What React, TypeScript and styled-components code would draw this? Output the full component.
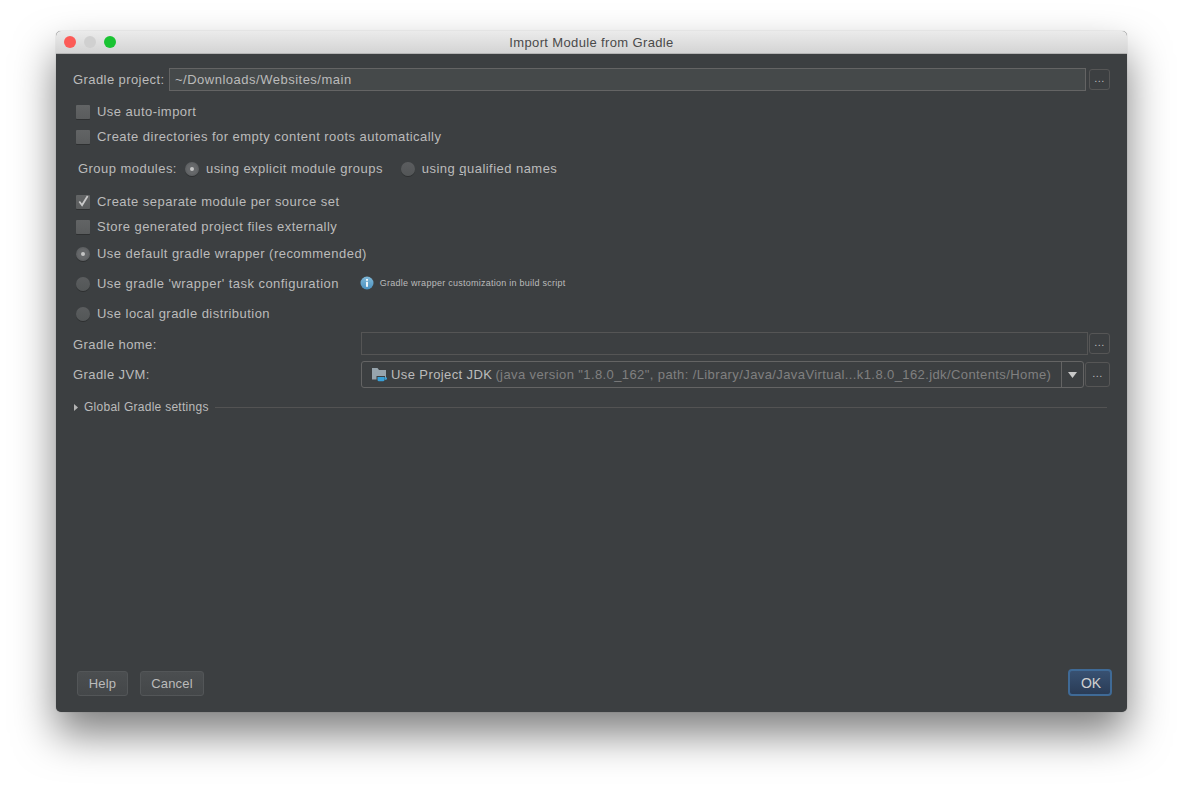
import React, { ReactElement } from 'react';
import styled, { createGlobalStyle } from 'styled-components';

const GlobalStyle = createGlobalStyle`
  html, body {
    margin: 0;
    height: 100%;
    background: #fff;
    overflow: hidden;
  }
  * {
    box-sizing: border-box;
  }
`;

function FolderCupIcon(): ReactElement {
  return (
    <svg width="16" height="16" viewBox="0 0 16 16">
      <path d="M0 1h5.5l1.5 2h7v9.5H0z" fill="#97a4ad" />
      <path d="M4.5 9h8.5v3.5a2 2 0 0 1-2 2H6.5a2 2 0 0 1-2-2z" fill="#3c3f41" />
      <path d="M5.5 10h7v2.8a1.5 1.5 0 0 1-1.5 1.5H7a1.5 1.5 0 0 1-1.5-1.5z" fill="#389fd6" />
      <path d="M12.5 10.5h2.5v2h-2.5z" fill="#389fd6" />
    </svg>
  );
}

function InfoIcon(): ReactElement {
  return (
    <svg width="14" height="14" viewBox="0 0 14 14">
      <defs>
        <linearGradient id="infoFill" x1="0" y1="0" x2="0" y2="1">
          <stop offset="0" stopColor="#7fb8d8" />
          <stop offset="1" stopColor="#4a90bf" />
        </linearGradient>
      </defs>
      <circle cx="7" cy="7" r="6.5" fill="url(#infoFill)" />
      <rect x="6" y="5.8" width="2" height="5" fill="#eef5fa" />
      <rect x="6" y="3" width="2" height="1.8" fill="#eef5fa" />
    </svg>
  );
}

function CheckboxRow({ label, checked }: { label: string; checked?: boolean }): ReactElement {
  return (
    <>
      <CheckBox>
        {checked && (
          <svg width="15" height="14" viewBox="0 0 15 14">
            <path d="M3.5 6.5l3 3.8L12.5 0.5" fill="none" stroke="#c8c8c8" strokeWidth="1.9" />
          </svg>
        )}
      </CheckBox>
      <OptionText>{label}</OptionText>
    </>
  );
}

function App(): ReactElement {
  return (
    <Page>
      <GlobalStyle />
      <Window>
        <TitleBar>
          <Lights>
            <Light $color="#fc5b57" />
            <Light $color="#d0d0d0" />
            <Light $color="#19c332" />
          </Lights>
          <Title>Import Module from Gradle</Title>
        </TitleBar>
        <Body>
          <Row $h={23} $indent={17}>
            <FieldLabel>Gradle project:</FieldLabel>
            <PathInput>~/Downloads/Websites/main</PathInput>
            <BrowseButton $width={21} $height={21}>...</BrowseButton>
          </Row>
          <Row $h={24} $top={8} $indent={20}>
            <CheckboxRow label="Use auto-import" />
          </Row>
          <Row $h={26} $indent={20}>
            <CheckboxRow label="Create directories for empty content roots automatically" />
          </Row>
          <Row $h={39} $indent={22}>
            <GroupLabel>Group modules:</GroupLabel>
            <Radio $checked />
            <GroupText>using explicit module groups</GroupText>
            <Radio />
            <OptionText>
              using <u>q</u>ualified names
            </OptionText>
          </Row>
          <Row $h={26} $indent={20}>
            <CheckboxRow label="Create separate module per source set" checked />
          </Row>
          <Row $h={24} $indent={20}>
            <CheckboxRow label="Store generated project files externally" />
          </Row>
          <Row $h={30} $indent={20}>
            <Radio $checked />
            <OptionText>Use default gradle wrapper (recommended)</OptionText>
          </Row>
          <Row $h={30} $indent={20}>
            <Radio />
            <OptionText>Use gradle 'wrapper' task configuration</OptionText>
            <Hint>
              <InfoIcon />
              <HintText>Gradle wrapper customization in build script</HintText>
            </Hint>
          </Row>
          <Row $h={30} $indent={20}>
            <Radio />
            <OptionText>Use local gradle distribution</OptionText>
          </Row>
          <Row $h={23} $top={4} $indent={17}>
            <HomeLabel>Gradle home:</HomeLabel>
            <HomeInput />
            <BrowseButton $width={21} $height={21}>...</BrowseButton>
          </Row>
          <Row $h={27} $top={6} $indent={17}>
            <WideLabel>Gradle JVM:</WideLabel>
            <Combo>
              <ComboValue>
                <FolderCupIcon />
                <JdkName>Use Project JDK</JdkName>
                <JdkPath>
                  (java version "1.8.0_162", path: /Library/Java/JavaVirtual...k1.8.0_162.jdk/Contents/Home)
                </JdkPath>
              </ComboValue>
              <ComboArrow>
                <svg width="9" height="6" viewBox="0 0 9 6">
                  <path d="M0 0h9L4.5 6z" fill="#c8c8c8" />
                </svg>
              </ComboArrow>
            </Combo>
            <BrowseButton $width={25} $height={25}>...</BrowseButton>
          </Row>
          <Row $h={38} $indent={18}>
            <svg width="4" height="7" viewBox="0 0 4 7">
              <path d="M0 0l4 3.5-4 3.5z" fill="#b4b4b4" />
            </svg>
            <SectionText>Global Gradle settings</SectionText>
            <SectionLine />
          </Row>
        </Body>
        <Footer>
          <FooterGroup>
            <DialogButton $width={51}>Help</DialogButton>
            <DialogButton $width={64}>Cancel</DialogButton>
          </FooterGroup>
          <OkButton>OK</OkButton>
        </Footer>
      </Window>
    </Page>
  );
}

const Page = styled.div`
  width: 1183px;
  height: 792px;
  padding: 31px 56px 80px;
  background: #fff;
  font-family: 'Liberation Sans', Arial, sans-serif;
`;

const Window = styled.div`
  height: 681px;
  display: flex;
  flex-direction: column;
  border-radius: 5px;
  overflow: hidden;
  background: #3c3f41;
  box-shadow: 0 22px 42px rgba(0, 0, 0, 0.5), 0 0 1px rgba(0, 0, 0, 0.4);
`;

const TitleBar = styled.div`
  position: relative;
  flex: none;
  height: 23px;
  display: flex;
  align-items: center;
  justify-content: center;
  background: linear-gradient(#ebebeb, #d4d4d4);
  border-bottom: 1px solid #b4b4b4;
`;

const Lights = styled.div`
  position: absolute;
  left: 8px;
  top: 5px;
  display: flex;
  gap: 8px;
`;

const Light = styled.span<{ $color: string }>`
  width: 12px;
  height: 12px;
  border-radius: 50%;
  background: ${({ $color }) => $color};
`;

const Title = styled.div`
  font-size: 13px;
  letter-spacing: 0.36px;
  color: #4a4a4a;
`;

const Body = styled.div`
  flex: 1;
  display: flex;
  flex-direction: column;
  padding: 14px 17px 0 0;
`;

const Row = styled.div<{ $h: number; $top?: number; $indent: number }>`
  flex: none;
  height: ${({ $h }) => $h}px;
  margin-top: ${({ $top }) => $top ?? 0}px;
  padding-left: ${({ $indent }) => $indent}px;
  display: flex;
  align-items: center;
`;

const FieldLabel = styled.span`
  flex: none;
  width: 96px;
  font-size: 13px;
  letter-spacing: 0.42px;
  color: #bbb;
`;

const WideLabel = styled(FieldLabel)`
  width: 288px;
`;

const HomeLabel = styled(WideLabel)`
  padding-top: 2px;
`;

const PathInput = styled.div`
  flex: 1;
  height: 23px;
  margin-right: 3px;
  padding-left: 5px;
  line-height: 21px;
  font-size: 13px;
  letter-spacing: 0.5px;
  color: #bbb;
  background: #45494a;
  border: 1px solid #646464;
`;

const HomeInput = styled.div`
  flex: 1;
  height: 23px;
  margin-right: 1px;
  border: 1px solid #555;
`;

const BrowseButton = styled.div<{ $width: number; $height: number }>`
  flex: none;
  width: ${({ $width }) => $width}px;
  height: ${({ $height }) => $height}px;
  display: flex;
  align-items: center;
  justify-content: center;
  padding-bottom: 4px;
  font-size: 11px;
  letter-spacing: 0.5px;
  color: #bbb;
  border: 1px solid #565656;
  border-radius: 3px;
`;

const CheckBox = styled.span`
  flex: none;
  width: 14px;
  height: 14px;
  margin: 2px 7px 0 0;
  background: linear-gradient(#626465, #5a5c5d);
  border-radius: 1px;
  box-shadow: 0 1px 0 #2e3031;
  display: flex;
`;

const Radio = styled.span<{ $checked?: boolean }>`
  flex: none;
  width: 14px;
  height: 14px;
  margin: 1px 7px 0 0;
  border-radius: 50%;
  background: ${({ $checked }) =>
    $checked ? 'radial-gradient(circle, #66686a 45%, #4f5254 100%)' : 'linear-gradient(#5b5d5f, #535657)'};
  box-shadow: 0 1px 0 #2e3031;
  display: flex;
  align-items: center;
  justify-content: center;

  &::after {
    content: '';
    display: ${({ $checked }) => ($checked ? 'block' : 'none')};
    width: 4px;
    height: 4px;
    border-radius: 50%;
    background: #c4c4c4;
  }
`;

const OptionText = styled.span`
  font-size: 13px;
  letter-spacing: 0.46px;
  color: #bbb;
  white-space: nowrap;
`;

const GroupLabel = styled(OptionText)`
  margin-right: 8px;
`;

const GroupText = styled(OptionText)`
  margin-right: 18px;
`;

const Hint = styled.span`
  display: flex;
  align-items: center;
  gap: 6px;
  margin-left: 21px;
`;

const HintText = styled.span`
  font-size: 9px;
  letter-spacing: 0.25px;
  color: #bbb;
  white-space: nowrap;
`;

const Combo = styled.div`
  flex: 1;
  height: 27px;
  margin-right: 1px;
  display: flex;
  align-items: center;
  border: 1px solid #646464;
  border-radius: 3px;
`;

const ComboValue = styled.div`
  flex: 1;
  min-width: 0;
  display: flex;
  align-items: center;
  padding-left: 10px;
  font-size: 13px;
  letter-spacing: 0.4px;
  white-space: nowrap;
`;

const JdkName = styled.span`
  margin: 0 3px 0 3px;
  color: #bbb;
`;

const JdkPath = styled.span`
  color: #808080;
`;

const ComboArrow = styled.div`
  flex: none;
  width: 22px;
  height: 100%;
  display: flex;
  align-items: center;
  justify-content: center;
  border-left: 1px solid #646464;
`;

const SectionText = styled.span`
  margin-left: 6px;
  font-size: 12px;
  letter-spacing: 0.27px;
  color: #bbb;
  white-space: nowrap;
`;

const SectionLine = styled.div`
  flex: 1;
  height: 1px;
  margin: 0 3px 0 6px;
  background: #535353;
`;

const Footer = styled.div`
  flex: none;
  display: flex;
  align-items: flex-end;
  justify-content: space-between;
  padding: 0 15px 16px 21px;
`;

const FooterGroup = styled.div`
  display: flex;
  gap: 12px;
`;

const DialogButton = styled.div<{ $width: number }>`
  width: ${({ $width }) => $width}px;
  height: 25px;
  display: flex;
  align-items: center;
  justify-content: center;
  font-size: 13px;
  letter-spacing: 0.2px;
  color: #bbb;
  background: linear-gradient(#4b4e50, #444749);
  border: 1px solid #535658;
  border-radius: 3px;
`;

const OkButton = styled.div`
  width: 44px;
  height: 27px;
  padding-left: 2px;
  display: flex;
  align-items: center;
  justify-content: center;
  font-size: 14px;
  color: #d0d0d0;
  background: linear-gradient(#385172, #2a3c56);
  border: 2px solid #3f6a96;
  border-radius: 4px;
`;

export default App;
